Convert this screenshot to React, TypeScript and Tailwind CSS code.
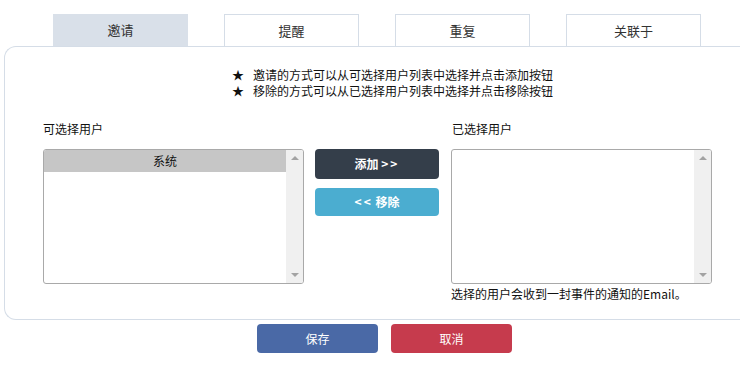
const tabs = ["邀请", "提醒", "重复", "关联于"];

const tips = [
  "邀请的方式可以从可选择用户列表中选择并点击添加按钮",
  "移除的方式可以从已选择用户列表中选择并点击移除按钮",
];

function ScrollBox({ children }: { children?: React.ReactNode }) {
  return (
    <div className="flex h-[135px] w-[261px] overflow-hidden rounded-[3px] border border-[#a9a9a9] bg-white">
      <div className="flex-1">{children}</div>
      <div className="flex w-[17px] flex-col items-center justify-between bg-[#f0f0f0] py-[6px]">
        <span className="h-0 w-0 border-x-[4px] border-b-[4px] border-x-transparent border-b-[#a3a3a3]" />
        <span className="h-0 w-0 border-x-[4px] border-t-[4px] border-x-transparent border-t-[#a3a3a3]" />
      </div>
    </div>
  );
}

export default function App() {
  return (
    <div
      className="relative h-[374px] w-[740px] overflow-hidden bg-white text-[12px] text-[#111]"
      style={{ fontFamily: '"Noto Sans CJK SC", "Noto Sans", sans-serif' }}
    >
      <div className="flex gap-[36px] pl-[53px] pt-[14px]">
        {tabs.map((t, i) => (
          <div
            key={t}
            className={
              i === 0
                ? "flex h-[32px] w-[135px] items-center justify-center bg-[#d9e0e9] text-[13px] text-[#333]"
                : "flex h-[32px] w-[135px] items-center justify-center border border-b-0 border-[#d5dde7] bg-white text-[13px] text-[#333]"
            }
          >
            {t}
          </div>
        ))}
      </div>

      <div className="ml-[4px] h-[274px] w-[760px] rounded-l-[12px] border border-r-0 border-[#d5dde7] pl-[38px] pt-[20px]">
        <div className="ml-[189px] flex flex-col leading-[16px]">
          {tips.map((tip) => (
            <div key={tip} className="flex items-center">
              <span className="w-[21px]">★</span>
              <span>{tip}</span>
            </div>
          ))}
        </div>

        <div className="mt-[22px] flex gap-[12px] leading-[16px]">
          <div className="w-[261px]">可选择用户</div>
          <div className="w-[124px]" />
          <div className="w-[261px]">已选择用户</div>
        </div>

        <div className="mt-[12px] flex gap-[11px]">
          <ScrollBox>
            <div className="flex h-[22px] items-center justify-center bg-[#c6c6c6]">系统</div>
          </ScrollBox>
          <div className="flex w-[124px] flex-col gap-[9px]">
            <button className="h-[30px] rounded-[4px] bg-[#343e4a] font-semibold text-white">
              添加 <span className="tracking-[2px]">&gt;&gt;</span>
            </button>
            <button className="h-[28px] rounded-[4px] bg-[#4badd0] font-semibold text-white">
              <span className="tracking-[2px]">&lt;&lt;</span> 移除
            </button>
          </div>
          <div className="ml-[1px] flex flex-col">
            <ScrollBox />
            <div className="mt-[2px] leading-[16px]">选择的用户会收到一封事件的通知的Email。</div>
          </div>
        </div>
      </div>

      <div className="mt-[4px] flex gap-[13px] pl-[257px]">
        <button className="h-[29px] w-[121px] rounded-[4px] bg-[#4a69a6] text-white">保存</button>
        <button className="h-[29px] w-[121px] rounded-[4px] bg-[#c63b4d] text-white">取消</button>
      </div>
    </div>
  );
}
